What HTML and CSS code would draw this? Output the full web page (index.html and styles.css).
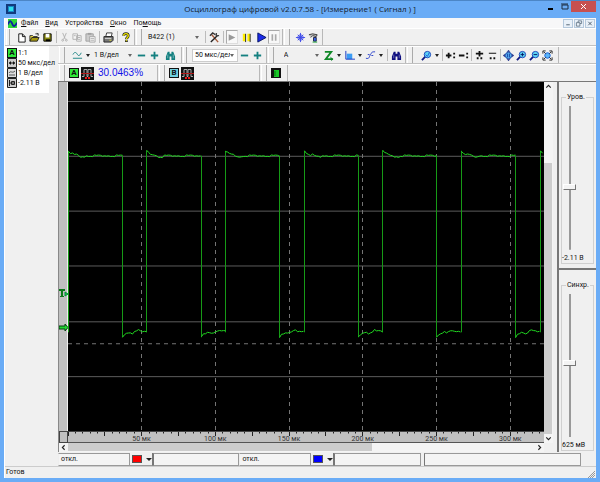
FILE: index.html
```html
<!DOCTYPE html>
<html lang="ru">
<head>
  <meta charset="UTF-8" />
  <meta name="viewport" content="width=device-width, initial-scale=1.0"/>
  <title>Осциллограф цифровой</title>
  <link rel="stylesheet" href="styles.css">
</head>
<body>
  <!-- Icon set -->
  <svg class="icon-set" aria-hidden="true">
    <symbol id="i-new" viewBox="0 0 12 12"><path d="M3 2h4l3 3v6H3z" fill="#fff" stroke="#111"/><path d="M7 2v3h3" fill="none" stroke="#111"/></symbol>
    <symbol id="i-open" viewBox="0 0 12 12"><path d="M1 10V4h3l1 1h4v1" fill="#ffe94a" stroke="#222"/><path d="M1 10l2-4h8l-2 4z" fill="#a89a10" stroke="#222"/><path d="M7 2h3l-1-1m1 1v2" fill="none" stroke="#222"/></symbol>
    <symbol id="i-save" viewBox="0 0 12 12"><path d="M2 2h8v8H2z" fill="#8a8a10" stroke="#000"/><path d="M4 2h4v4H4z" fill="#fff"/><path d="M4 8h5v2H4z" fill="#000"/></symbol>
    <symbol id="i-cut" viewBox="0 0 12 12"><g fill="none" stroke="#b0b0b0"><path d="M4 1l3 7M8 1L5 8"/><circle cx="4" cy="9" r="1"/><circle cx="8" cy="9" r="1"/></g></symbol>
    <symbol id="i-copy" viewBox="0 0 12 12"><g fill="#f4f4f4" stroke="#b0b0b0"><path d="M1 2h5v6H1zM5 4h5v6H5z"/><path d="M6 6h3M6 8h3M2 4h2"/></g></symbol>
    <symbol id="i-paste" viewBox="0 0 12 12"><path d="M1 2h8v8H1z" fill="#ccc" stroke="#a0a0a0"/><path d="M3 1h4v2H3z" fill="#a0a0a0"/><path d="M5 5h6v6H5z" fill="#f4f4f4" stroke="#a8a8a8"/><path d="M6 7h4M6 9h4" stroke="#b0b0b0"/></symbol>
    <symbol id="i-print" viewBox="0 0 12 12"><path d="M4 1h6l-1 4H3z" fill="#fff" stroke="#333"/><path d="M1 5h10v4l-2 2H1z" fill="#777" stroke="#222"/><path d="M2 7h7" stroke="#ddd"/><path d="M7 9h2" stroke="#dd3"/></symbol>
    <symbol id="i-help" viewBox="0 0 12 12"><path d="M4 4c0-3 5-3 5 0 0 2-2 2-2 4M7 9v2" fill="none" stroke="#222" stroke-width="3"/><path d="M4 4c0-3 5-3 5 0 0 2-2 2-2 4M7 9v1" fill="none" stroke="#f0e800" stroke-width="1.5"/></symbol>
    <symbol id="i-tools" viewBox="0 0 12 12"><path d="M3 3l7 8" stroke="#a65a3a" stroke-width="1.5"/><path d="M9 4l-7 7" stroke="#222" stroke-width="1.5"/><path d="M1 4l3-3 3 2" fill="none" stroke="#333" stroke-width="1.5"/><path d="M8 1v3h3" fill="none" stroke="#444" stroke-width="1.5"/></symbol>
    <symbol id="i-play-off" viewBox="0 0 12 12"><path d="M2 2l8 4-8 4z" fill="#999"/></symbol>
    <symbol id="i-play" viewBox="0 0 12 12"><path d="M2 1l9 5-9 5z" fill="#1a2ae8" stroke="#001060"/></symbol>
    <symbol id="i-pause" viewBox="0 0 12 12"><path d="M2 2h3v8H2zM7 2h3v8H7z" fill="#ffee00"/><path d="M5 2v9M10 2v9" stroke="#222"/></symbol>
    <symbol id="i-pause-off" viewBox="0 0 12 12"><path d="M3 2h2v8H3zM7 2h2v8H7z" fill="#aaa"/></symbol>
    <symbol id="i-net" viewBox="0 0 12 12"><g fill="none" stroke="#3c48e8"><circle cx="6" cy="6" r="3"/><path d="M6 1v10M1 6h10M3 3l6 6M9 3L3 9"/></g></symbol>
    <symbol id="i-probe" viewBox="0 0 12 12"><path d="M1 3l4-1 5 1-1 2-4-1-2 2" fill="#bbb" stroke="#333"/><path d="M6 6h3v4H6z" fill="#36e" stroke="#224"/><path d="M5 11h5" stroke="#16a030"/></symbol>
    <symbol id="i-wave" viewBox="0 0 12 12"><path d="M1 5c2-4 4-2 5 0s3 1 4-2M1 9h10" fill="none" stroke="#168080" stroke-width="1"/></symbol>
    <symbol id="i-minus" viewBox="0 0 12 12"><path d="M2 5h8v2H2z"/></symbol>
    <symbol id="i-plus" viewBox="0 0 12 12"><path d="M2 5h3V2h2v3h3v2H7v3H5V7H2z"/></symbol>
    <symbol id="i-find" viewBox="0 0 12 12"><path d="M3 2h2v2h2V2h2l2 5v4H7V7H5v4H1V7z"/><path d="M3 5v4M9 5v4" stroke="#fff" stroke-opacity=".4"/></symbol>
    <symbol id="i-edge" viewBox="0 0 12 12"><path d="M2 2h7L3 10h8" fill="none" stroke="#108828" stroke-width="2"/><path d="M8 7l3 3-2 2" fill="#108828"/></symbol>
    <symbol id="i-area" viewBox="0 0 12 12"><path d="M3 4h6v6H3z" fill="#3b9cf4"/><path d="M2 1v9h10" fill="none" stroke="#1030c0"/></symbol>
    <symbol id="i-curve" viewBox="0 0 12 12"><path d="M1 9c4 1 3-1 5-4s1-3 5-3" fill="none" stroke="#2038c8"/><path d="M3 5h2M7 6h2" stroke="#2038c8"/></symbol>
    <symbol id="i-zoom" viewBox="0 0 12 12"><path d="M5 7l-4 4" stroke="#101880" stroke-width="2"/><circle cx="7" cy="5" r="3.5" fill="#5cd4f4" stroke="#1840b8"/></symbol>
    <symbol id="i-zoom-in" viewBox="0 0 12 12"><use href="#i-zoom"/><path d="M5 5h4M7 3v4" stroke="#001060"/></symbol>
    <symbol id="i-zoom-out" viewBox="0 0 12 12"><use href="#i-zoom"/><path d="M5 5h4" stroke="#001060"/></symbol>
    <symbol id="i-zoom-mark" viewBox="0 0 12 12"><use href="#i-zoom"/><path d="M5 5l2 2 2-4" fill="none" stroke="#2050e0"/></symbol>
    <symbol id="i-xplus" viewBox="0 0 12 12"><path d="M1 5h2V3h2v2h2v2H5v2H3V7H1zM9 3h2v2H9zM9 7h2v2H9z" fill="#111"/></symbol>
    <symbol id="i-xminus" viewBox="0 0 12 12"><path d="M1 5h6v2H1zM9 3h2v2H9zM9 7h2v2H9z" fill="#111"/></symbol>
    <symbol id="i-yplus" viewBox="0 0 12 12"><path d="M2 3h3V1h2v2h3v2H7v2H5V5H2zM3 8h2v2H3zM7 8h2v2H7z" fill="#111"/></symbol>
    <symbol id="i-yminus" viewBox="0 0 12 12"><path d="M2 3h8v1H2zM3 8h2v2H3zM7 8h2v2H7z" fill="#111"/></symbol>
    <symbol id="i-pan" viewBox="0 0 12 12"><circle cx="6" cy="6" r="3.5" fill="#5ab4f4" stroke="#1840a0"/><path d="M6 0l2 2H4zM6 12l2-2H4zM0 6l2-2v4zM12 6l-2-2v4z" fill="#102080"/><path d="M5 4v4M7 4v4" stroke="#1840a0"/></symbol>
    <symbol id="i-fit" viewBox="0 0 12 12"><circle cx="6" cy="6" r="3" fill="#5ab4f4" stroke="#1860e0"/><path d="M1 4V1h3M8 1h3v3M11 8v3H8M4 11H1V8M2 2l2 2M10 2L8 4M2 10l2-2M10 10L8 8" fill="none" stroke="#222"/></symbol>
    <symbol id="i-pulse" viewBox="0 0 13 13"><path d="M0 0h13v13H0z" fill="#111"/><path d="M1 9.500h2v-7h3v7h1v-7h3v7h2" fill="none" stroke="#aaa"/><path d="M0 6.500h13" stroke="#b01818"/><path d="M4 10h2v2H4zM7 10h2v2H7z" fill="#f01818"/></symbol>
    <symbol id="i-meter" viewBox="0 0 10 10"><path d="M0 0h10v10H0z" fill="#111"/><path d="M3 2h5v7H3z" fill="#18c828"/><path d="M4 3v5" stroke="#087010"/></symbol>
    <symbol id="i-time" viewBox="0 0 10 10"><path d="M.5.5h9v9h-9z" fill="#ccc" stroke="#222"/><path d="M2 5h6" stroke="#111"/><path d="M4 3v4L2 5zM6 3v4l2-2z" fill="#111"/></symbol>
    <symbol id="i-volt" viewBox="0 0 10 10"><path d="M.5.5h9v9h-9z" fill="#ddd" stroke="#222"/><path d="M2 5c2-3 3 1 6-2M2 7h6" fill="none" stroke="#555"/></symbol>
    <symbol id="i-offset" viewBox="0 0 10 10"><path d="M.5.5h9v9h-9z" fill="#ccc" stroke="#222"/><path d="M2.500 2v6M4.500 3.500h3v3h-3zM2 5h6" fill="none" stroke="#222"/></symbol>
  </svg>

  <div class="window">
    <header class="title-bar">
      <svg class="app-icon" viewBox="0 0 10 10"><path d="M0 0h10v10H0z" fill="#123a7c"/><path d="M2 2h6v6H2z" fill="#1888c8"/><path d="M3 3h4v4H3z" fill="#30e0e8"/></svg>
      <h1 class="title">Осциллограф цифровой v2.0.7.58 - [Измерение1 ( Сигнал ) ]</h1>
      <div class="window-buttons">
        <button aria-label="Свернуть"><svg viewBox="0 0 9 9"><path d="M2 6h5v2H2z"/></svg></button>
        <button aria-label="Развернуть"><svg viewBox="0 0 9 9"><path d="M2 3h6v4H2z" fill="none" stroke="#1c2c40"/><path d="M1 2h7" stroke="#1c2c40"/></svg></button>
        <button class="close" aria-label="Закрыть"><svg viewBox="0 0 9 9"><path d="M2 2l5 5M7 2L2 7" stroke="#fff"/></svg></button>
      </div>
    </header>

    <div class="client">
      <nav class="menu-bar">
        <svg class="doc-icon" viewBox="0 0 10 10"><path d="M0 0h10v10H0z" fill="#30d838"/><path d="M0 6c2-6 4-3 5 0s3 2 5-2" fill="none" stroke="#1020a0" stroke-width="2"/></svg>
        <button><u>Ф</u>айл</button>
        <button><u>В</u>ид</button>
        <button>Устройства</button>
        <button><u>О</u>кно</button>
        <button>По<u>м</u>ощь</button>
        <div class="mdi-buttons">
          <button aria-label="Свернуть окно"><svg viewBox="0 0 8 8"><path d="M2 5h4v1H2z" fill="#456"/></svg></button>
          <button aria-label="Восстановить окно"><svg viewBox="0 0 8 8"><path d="M3 3V1h4v3H5M1 3h4v4H1z" fill="none" stroke="#678"/></svg></button>
          <button aria-label="Закрыть окно"><svg viewBox="0 0 8 8"><path d="M2 2l4 4M6 2L2 6" stroke="#456"/></svg></button>
        </div>
      </nav>

      <div class="toolbar">
        <div class="band band-file">
          <button aria-label="Новый"><svg><use href="#i-new"/></svg></button>
          <button aria-label="Открыть"><svg><use href="#i-open"/></svg></button>
          <button aria-label="Сохранить"><svg><use href="#i-save"/></svg></button>
          <i class="sep"></i>
          <button aria-label="Вырезать"><svg><use href="#i-cut"/></svg></button>
          <button aria-label="Копировать"><svg><use href="#i-copy"/></svg></button>
          <button aria-label="Вставить"><svg><use href="#i-paste"/></svg></button>
          <i class="sep"></i>
          <button aria-label="Печать"><svg><use href="#i-print"/></svg></button>
          <i class="sep"></i>
          <button aria-label="Справка"><svg><use href="#i-help"/></svg></button>
        </div>
        <div class="band">
          <div class="combo combo-device"><select aria-label="Устройство"><option>B422 (1)</option></select></div>
          <i class="sep"></i>
          <button aria-label="Настройка"><svg><use href="#i-tools"/></svg></button>
          <i class="sep"></i>
          <button class="pressed" aria-label="Пуск"><svg><use href="#i-play-off"/></svg></button>
          <button class="wide" aria-label="Пауза"><svg><use href="#i-pause"/></svg></button>
          <button aria-label="Старт"><svg><use href="#i-play"/></svg></button>
          <button class="pressed" aria-label="Стоп"><svg><use href="#i-pause-off"/></svg></button>
        </div>
        <div class="band">
          <button aria-label="Сеть"><svg><use href="#i-net"/></svg></button>
          <button aria-label="Датчик"><svg><use href="#i-probe"/></svg></button>
        </div>
      </div>

      <div class="workspace">
        <aside class="channel-info">
          <ul>
            <li><b class="tag tag-a">A</b>1:1</li>
            <li><svg><use href="#i-time"/></svg>50 мкс/дел</li>
            <li><svg><use href="#i-volt"/></svg>1 В/дел</li>
            <li><svg><use href="#i-offset"/></svg>-2.11 В</li>
          </ul>
        </aside>

        <main class="main">
          <div class="toolbar">
            <div class="band band-volts">
              <button aria-label="Вид сигнала"><svg><use href="#i-wave"/></svg></button>
              <button class="drop" aria-label="Список"></button>
              <div class="combo combo-volts"><select aria-label="Вольт на деление"><option>1 В/дел</option></select></div>
              <button class="teal" aria-label="Меньше"><svg><use href="#i-minus"/></svg></button>
              <button class="teal" aria-label="Больше"><svg><use href="#i-plus"/></svg></button>
              <button class="teal find" aria-label="Найти"><svg><use href="#i-find"/></svg></button>
            </div>
            <div class="band band-time">
              <div class="combo combo-time"><select aria-label="Время на деление"><option>50 мкс/дел</option></select></div>
              <button class="teal" aria-label="Меньше"><svg><use href="#i-minus"/></svg></button>
              <button class="teal" aria-label="Больше"><svg><use href="#i-plus"/></svg></button>
            </div>
            <div class="band band-sync">
              <div class="combo combo-source"><select aria-label="Источник"><option>A</option></select></div>
              <button aria-label="Фронт"><svg><use href="#i-edge"/></svg></button>
              <button class="drop" aria-label="Список"></button>
              <button aria-label="Уровень"><svg><use href="#i-area"/></svg></button>
              <button class="drop" aria-label="Список"></button>
              <button aria-label="Кривая"><svg><use href="#i-curve"/></svg></button>
              <button class="drop" aria-label="Список"></button>
              <i class="sep"></i>
              <button class="navy" aria-label="Найти"><svg><use href="#i-find"/></svg></button>
            </div>
            <div class="band band-zoom">
              <button aria-label="Масштаб"><svg><use href="#i-zoom-mark"/></svg></button>
              <button class="drop" aria-label="Список"></button>
              <i class="sep"></i>
              <button aria-label="Шире"><svg><use href="#i-xplus"/></svg></button>
              <button aria-label="Уже"><svg><use href="#i-xminus"/></svg></button>
              <i class="sep"></i>
              <button aria-label="Выше"><svg><use href="#i-yplus"/></svg></button>
              <button aria-label="Ниже"><svg><use href="#i-yminus"/></svg></button>
              <i class="sep"></i>
              <button aria-label="Сдвиг"><svg><use href="#i-pan"/></svg></button>
              <button aria-label="Увеличить"><svg><use href="#i-zoom-in"/></svg></button>
              <button aria-label="Уменьшить"><svg><use href="#i-zoom-out"/></svg></button>
              <button aria-label="Вписать"><svg><use href="#i-fit"/></svg></button>
            </div>
          </div>

          <div class="toolbar toolbar-measure">
            <div class="band band-a">
              <b class="tag tag-a">A</b>
              <svg class="pulse"><use href="#i-pulse"/></svg>
              <output>30.0463%</output>
            </div>
            <div class="band band-b">
              <b class="tag tag-b">B</b>
              <svg class="pulse"><use href="#i-pulse"/></svg>
            </div>
            <div class="band band-meter">
              <svg class="meter"><use href="#i-meter"/></svg>
            </div>
          </div>

          <div class="scope-area">
            <section class="scope">
              <div class="level-strip">
                <svg class="marker marker-t" viewBox="0 0 9 9"><path d="M0 1h6v2H4v5h1v1H1V8h1V3H0z" fill="#0a7a18"/><path d="M6 4l3 2-3 2z" fill="#20d830" stroke="#084"/></svg>
                <svg class="marker marker-zero" viewBox="0 0 9 9"><path d="M0 3h6V1l3 3.500-3 3.500V6H0z" fill="#20d830" stroke="#064010"/></svg>
              </div>
              <svg class="plot" id="plot" viewBox="0 0 476 350" preserveAspectRatio="none"></svg>
              <div class="scroll scroll-v">
                <button aria-label="Вверх"><svg viewBox="0 0 8 8"><path d="M2 5l2-2 2 2"/></svg></button>
                <div class="rail"><div class="thumb"></div></div>
                <button aria-label="Вниз"><svg viewBox="0 0 8 8"><path d="M2 3l2 2 2-2"/></svg></button>
              </div>
              <div class="ruler-corner"></div>
              <div class="ruler">
                <svg id="ticks" viewBox="0 0 476 4" preserveAspectRatio="none"></svg>
                <div class="ruler-labels">
                  <span>50 мк</span><span>100 мк</span><span>150 мк</span><span>200 мк</span><span>250 мк</span><span>300 мк</span>
                </div>
              </div>
              <div class="scroll scroll-h">
                <button aria-label="Влево"><svg viewBox="0 0 8 8"><path d="M5 2L3 4l2 2"/></svg></button>
                <div class="rail"><div class="thumb"></div></div>
                <button aria-label="Вправо"><svg viewBox="0 0 8 8"><path d="M3 2l2 2-2 2"/></svg></button>
              </div>
            </section>

            <aside class="levels">
              <div class="level-pane">
                <fieldset>
                  <legend><label for="level">Уров.</label></legend>
                  <input type="range" id="level" value="57">
                  <output for="level">-2.11 В</output>
                </fieldset>
              </div>
              <div class="level-pane">
                <fieldset>
                  <legend><label for="sync">Синхр.</label></legend>
                  <input type="range" id="sync" value="48">
                  <output for="sync">625 мВ</output>
                </fieldset>
              </div>
            </aside>
          </div>

          <div class="cursor-row">
            <span class="cell">откл.</span>
            <button class="color-pick red" aria-label="Цвет первого курсора"></button>
            <span class="cell cell-value"></span>
            <span class="cell">откл.</span>
            <button class="color-pick blue" aria-label="Цвет второго курсора"></button>
            <span class="cell cell-value"></span>
            <span class="cell cell-note"></span>
          </div>
        </main>
      </div>

      <footer class="status-bar">
        <span>Готов</span>
        <svg viewBox="0 0 8 8"><path d="M1 8l7-7M3 8l5-5M5 8l3-3" stroke="#999"/></svg>
      </footer>
    </div>
  </div>

  <script src="scope.js"></script>
</body>
</html>
```
FILE: styles.css
```css
* {
  margin: 0;
  padding: 0;
  box-sizing: border-box;
}

body {
  font-family: Roboto, 'Noto Sans', sans-serif;
  font-size: 7px;
  line-height: 9px;
  color: #111;
}

button {
  border: none;
  background: none;
  font: inherit;
  color: inherit;
}

.icon-set {
  display: none;
}

/* Window frame */
.window {
  min-height: 100vh;
  display: flex;
  flex-direction: column;
  background: #6aacf6;
  border-top: 1px solid #4c86c6;
  padding: 0 4px 4px 4px;
}

.title-bar {
  height: 17px;
  display: grid;
  grid-template-columns: 52px 1fr 52px;
}

.app-icon {
  width: 10px;
  height: 10px;
  margin: 3px 0 0 2px;
}

.title {
  font-family: 'Open Sans', 'Noto Sans', sans-serif;
  font-size: 8px;
  font-weight: 400;
  line-height: 15px;
  text-align: center;
  white-space: nowrap;
  color: #14202c;
}

.window-buttons {
  display: flex;
  justify-content: flex-end;
  align-items: flex-start;
}

.window-buttons button {
  width: 14px;
  height: 11px;
}

.window-buttons svg {
  display: block;
  width: 9px;
  height: 9px;
  margin: 0 auto;
}

.window-buttons .close {
  width: 25px;
  background: #c75050;
}

.client {
  flex: 1;
  display: flex;
  flex-direction: column;
  background: #f0f0f0;
  border-left: 1px solid #fff;
}

/* Menu */
.menu-bar {
  height: 10px;
  display: flex;
  align-items: center;
  gap: 7px;
  background: #f7f7f8;
  padding-left: 3px;
}

.doc-icon {
  width: 9px;
  height: 9px;
  margin-right: -3px;
}

.mdi-buttons {
  display: flex;
  gap: 1px;
  margin-left: auto;
  padding-right: 1px;
}

.mdi-buttons button {
  width: 10px;
  height: 9px;
  border: 1px solid #b4c8dc;
  background: #e8f0f8;
}

.mdi-buttons svg {
  display: block;
  width: 8px;
  height: 7px;
}

/* Toolbars */
.toolbar {
  height: 18px;
  display: flex;
  border-bottom: 1px solid #c0c0c0;
  border-top: 1px solid #fff;
}

.band {
  display: flex;
  align-items: center;
  border-right: 1px solid #b8b8b8;
  padding-right: 2px;
}

.band::before {
  content: '';
  align-self: stretch;
  width: 4px;
  margin: 0 4px 0 1px;
  border-left: 1px solid #fff;
  border-right: 1px solid #aaa;
}

.band button {
  flex: none;
  width: 13px;
  height: 14px;
  display: flex;
  align-items: center;
  justify-content: center;
}

.band button svg {
  width: 11px;
  height: 11px;
}

.band .drop {
  width: 8px;
}

.drop::after,
.combo::after,
.color-pick::after {
  content: '';
  border: 2px solid transparent;
  border-top: 3px solid #222;
  border-bottom: none;
}

.combo::after {
  border-top-color: #666;
}

.band .wide {
  width: 17px;
}

.band .pressed {
  width: 12px;
  background: #f8f8f8;
  border: 1px solid #aaa;
  border-right-color: #ddd;
  border-bottom-color: #ddd;
}

.teal {
  fill: #148080;
}

.navy {
  fill: #101080;
}

.sep {
  width: 1px;
  height: 12px;
  margin: 0 2px;
  background: #bbb;
}

.combo {
  display: flex;
  align-items: center;
  height: 12px;
  padding-right: 3px;
}

.combo select {
  flex: 1;
  min-width: 0;
  appearance: none;
  border: none;
  background: none;
  font: inherit;
  color: inherit;
  padding-left: 2px;
}

.band-file {
  width: 130px;
}

.band-file::before {
  margin-right: 5px;
}

.combo-device {
  width: 56px;
  margin-right: 1px;
}

.band-volts {
  width: 124px;
}

.band-volts .find {
  margin-left: 3px;
}

.band-volts::before {
  margin-right: 6px;
}

.combo-volts {
  width: 43px;
}

.band-time {
  width: 85px;
}

.combo-time {
  width: 46px;
  height: 13px;
  margin-left: 1px;
  border: 1px solid #ccc;
  background: #fff;
}

.band-sync {
  width: 139px;
}

.band-sync::before {
  margin-right: 8px;
}

.combo-source {
  width: 43px;
}

.band-zoom {
  padding-right: 4px;
}

.band-zoom::before {
  margin-right: 7px;
}

.band-zoom .sep {
  margin: 0 1px;
}

/* Measurements */
.toolbar-measure {
  border-bottom: none;
  height: 17px;
}

.toolbar-measure .band {
  gap: 2px;
}

.toolbar-measure .band::before {
  margin-right: 2px;
}

.toolbar-measure output {
  margin-left: 2px;
  font: 10px/12px 'Liberation Sans', sans-serif;
  color: #1010e8;
}

.band-a {
  width: 100px;
}

.band-b {
  width: 102px;
}

.band-meter {
  width: 28px;
}

.tag {
  width: 10px;
  height: 10px;
  border: 1px solid #111;
  font-size: 8px;
  line-height: 8px;
  text-align: center;
}

.tag-a {
  background: #30e838;
}

.tag-b {
  background: #70d0e0;
}

.pulse {
  width: 13px;
  height: 13px;
}

.meter {
  width: 10px;
  height: 10px;
}

/* Workspace */
.workspace {
  flex: 1;
  display: flex;
}

.channel-info {
  width: 53px;
}

.channel-info ul {
  list-style: none;
  width: 44px;
  height: 47px;
  padding: 2px 0 0 2px;
  background: #fff;
}

.channel-info li {
  display: flex;
  align-items: center;
  gap: 1px;
  height: 10px;
  white-space: nowrap;
}

.channel-info svg {
  flex: none;
  width: 10px;
  height: 10px;
}

.main {
  flex: 1;
  min-width: 0;
  display: flex;
  flex-direction: column;
}

.scope-area {
  flex: 1;
  display: flex;
  border-top: 1px solid #777;
}

.scope {
  flex: 1;
  min-width: 0;
  display: grid;
  grid-template-columns: 9px 1fr 9px;
  grid-template-rows: 1fr 12px 9px;
  border-left: 1px solid #888;
}

.level-strip {
  position: relative;
  background: #c0c0c0;
  border-right: 1px solid #eee;
}

/* Markers ride over the strip at their signal level */
.marker {
  position: absolute;
  left: 0;
  width: 9px;
  height: 9px;
}

.marker-t {
  top: 59%;
}

.marker-zero {
  top: 69%;
}

.plot {
  width: 100%;
  height: 100%;
  min-height: 0;
  contain: size;
  background: #000;
}

.plot path {
  fill: none;
  vector-effect: non-scaling-stroke;
}

.plot .grid {
  stroke: #5c5c5c;
}

.plot .dash {
  stroke: #747474;
  stroke-dasharray: 4 4;
}

.plot .edge {
  stroke: #169a16;
}

.plot .trace {
  stroke: #22dc22;
}

.ruler-corner {
  background: #c0c0c0;
  border: 1px solid #444;
}

.ruler {
  background: #c0c0c0;
  border-top: 1px solid #444;
  border-bottom: 1px solid #555;
}

.ruler svg {
  display: block;
  width: 100%;
  height: 4px;
}

.ruler-labels {
  display: flex;
  line-height: 7px;
  color: #333;
  overflow: hidden;
}

.ruler-labels::before {
  content: '';
  flex: 0 0 7.7%;
}

.ruler-labels span {
  flex: 0 0 15.5%;
  text-align: center;
}

.scroll {
  display: flex;
  background: #f4f4f4;
}

.scroll-v {
  grid-row: span 2;
  flex-direction: column;
}

.scroll-h {
  grid-column: 1 / 3;
}

.scroll button {
  flex: none;
  width: 9px;
  height: 9px;
}

.scroll button svg {
  display: block;
  width: 9px;
  height: 9px;
  fill: none;
  stroke: #222;
}

.rail {
  flex: 1;
  display: flex;
}

.thumb {
  background: #cdcdcd;
}

.scroll-v .thumb {
  width: 8px;
  height: 79%;
  margin-top: auto;
}

.scroll-v .rail {
  min-height: 0;
}

.scroll-h .thumb {
  width: 65%;
  height: 8px;
}

/* Level sliders */
.levels {
  width: 39px;
  margin-left: 4px;
  display: flex;
  flex-direction: column;
  border-left: 2px solid #777;
}

.level-pane {
  flex: 1;
  display: flex;
  padding: 11px 2px 4px 2px;
}

.level-pane + .level-pane {
  border-top: 2px solid #777;
  padding-bottom: 1px;
}

.level-pane fieldset {
  flex: 1;
  min-width: 0;
  display: flex;
  flex-direction: column;
  border: 1px solid #d0d0d0;
}

.level-pane legend {
  margin-left: 4px;
  padding: 0 1px;
}

.level-pane output {
  white-space: nowrap;
}

.level-pane input {
  flex: 1;
  min-height: 0;
  width: 13px;
  margin: 4px 0 4px 1px;
  appearance: none;
  writing-mode: vertical-lr;
  background: linear-gradient(#999, #999) center / 2px 100% no-repeat;
}

.level-pane input::-webkit-slider-thumb {
  appearance: none;
  width: 13px;
  height: 6px;
  background: #f4f4f4;
  border: 1px solid #fff;
  border-right-color: #777;
  border-bottom-color: #777;
}

/* Cursor readouts */
.cursor-row {
  display: flex;
  height: 14px;
  padding-top: 1px;
  margin-right: 15px;
}

.cell {
  flex: 70;
  border: 1px solid #999;
  border-left-color: #eee;
  padding: 1px 2px;
  background: #f4f4f4;
}

.cell-value {
  flex: 86;
  border-left-color: #777;
}

.cell-note {
  flex: 161;
  margin-left: 3px;
  border-left-color: #777;
}

.color-pick {
  width: 23px;
  display: flex;
  align-items: center;
  gap: 4px;
  padding-left: 2px;
  border-right: 1px solid #777;
  border-bottom: 1px solid #999;
}

.color-pick::before {
  content: '';
  width: 9px;
  height: 6px;
  border: 1px solid #555;
}

.color-pick::after {
  border-width: 3px 3px 0 3px;
}

.red::before {
  background: #f00;
}

.blue::before {
  background: #00f;
}

.status-bar {
  display: flex;
  justify-content: space-between;
  align-items: center;
  height: 12px;
  padding: 0 1px;
  border-top: 1px solid #ccc;
}

.status-bar svg {
  align-self: flex-end;
  width: 8px;
  height: 8px;
}
```
FILE: scope.js
```js
const plot = document.getElementById('plot');
const ticks = document.getElementById('ticks');

const WIDTH = 476;
const HEIGHT = 350;
const DIVISION = 73.7;

function addPath(svg, className, d) {
  const path = document.createElementNS('http://www.w3.org/2000/svg', 'path');
  path.setAttribute('class', className);
  path.setAttribute('d', d);
  svg.appendChild(path);
}

// Grid
let grid = '';
for (const y of [19, 74, 129, 184, 240, 295]) {
  grid += `M0 ${y + 0.5}H${WIDTH}`;
}
addPath(plot, 'grid', grid);

let dashes = `M0 262.5H${WIDTH}`;
for (let i = 1; i <= 6; i++) {
  dashes += `M${Math.floor(i * DIVISION) + 0.5} 0V${HEIGHT}`;
}
addPath(plot, 'dash', dashes);

// Signal: overshoot after each rise, slow recovery after each fall
const noise = [0, 0.6, -0.7, 0.4, 0.8, -0.5, 0, -0.8, 0.5, 0.7, -0.4];
const high = [69, 71, 72, 73, 73, 74, 75, 75, 75];
const low = [256, 253, 252, 251, 251, 252, 251, 250, 249, 250, 250];
let edges = '';
let trace = '';

function drawLevel(from, to, shape) {
  for (let x = from, i = 0; x <= to; x += 2, i++) {
    const base = i < shape.length ? shape[i] : shape === high ? 74 : 250;
    const y = base + noise[(i * 3 + Math.round(from)) % noise.length];
    trace += `${i ? 'L' : 'M'}${x} ${y}`;
  }
}

for (let n = 0; n <= 6; n++) {
  const rise = Math.round(n * 78.7 - 0.5 * (n > 0)) + 0.5;
  const fall = Math.round(54 + n * 78.6) + 0.5;
  if (rise < WIDTH) {
    drawLevel(rise, Math.min(fall, WIDTH), high);
    edges += `M${rise} 69V251`;
  }
  if (fall < WIDTH) {
    drawLevel(fall, fall + 24, low);
    edges += `M${fall} 74V256`;
  }
}
addPath(plot, 'edge', edges);
addPath(plot, 'trace', trace);

// Ruler marks
let marks = '';
for (let i = 0; i * DIVISION / 10 < WIDTH; i++) {
  marks += `M${Math.floor(i * DIVISION / 10) + 0.5} 0V${i % 5 ? 1.5 : 4}`;
}
addPath(ticks, 'mark', marks);
ticks.querySelector('path').setAttribute('stroke', '#222');
```
